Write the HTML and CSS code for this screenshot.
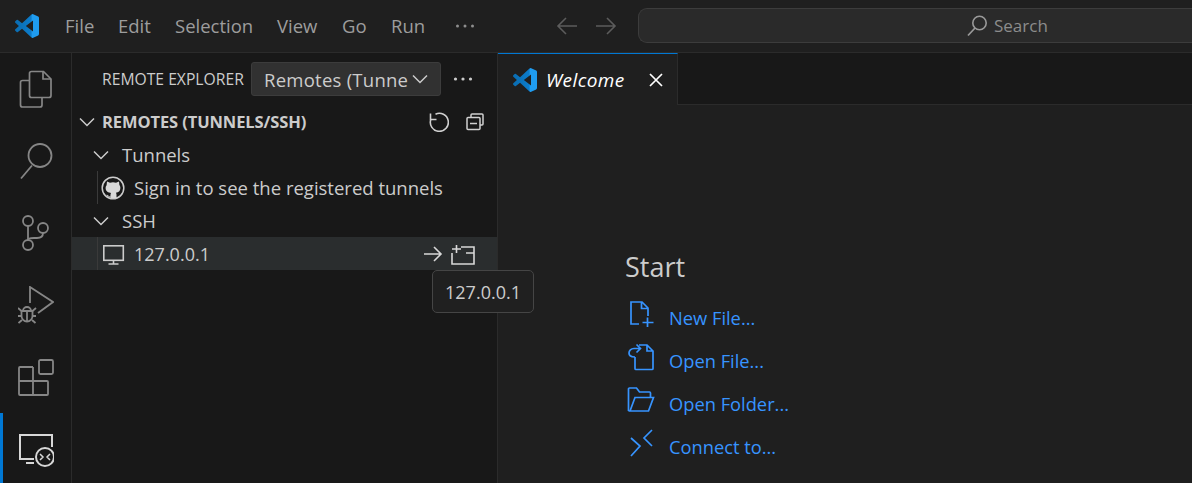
FILE: index.html
```html
<!DOCTYPE html>
<html lang="en">
<head>
<meta charset="utf-8">
<title>Remote Explorer - Visual Studio Code</title>
<link rel="stylesheet" href="styles.css">
</head>
<body>
<svg class="defs" width="0" height="0" aria-hidden="true">
  <defs>
    <linearGradient id="vsblue" x1="0" x2="1" y1="0" y2="0">
      <stop offset="0" stop-color="#0a6cb0"/>
      <stop offset=".68" stop-color="#0c7ccb"/>
      <stop offset=".7" stop-color="#1f9cf0"/>
      <stop offset="1" stop-color="#1f9cf0"/>
    </linearGradient>
    <symbol id="vslogo" viewBox="0 0 24 24">
      <path fill="url(#vsblue)" d="M23.15 2.587L18.21.21a1.494 1.494 0 0 0-1.705.29l-9.46 8.63-4.12-3.128a.999.999 0 0 0-1.276.057L.327 7.261A1 1 0 0 0 .326 8.74L3.899 12 .326 15.26a1 1 0 0 0 .001 1.479L1.65 17.94a.999.999 0 0 0 1.276.057l4.12-3.128 9.46 8.63a1.492 1.492 0 0 0 1.704.29l4.942-2.377A1.5 1.5 0 0 0 24 20.06V3.939a1.5 1.5 0 0 0-.85-1.352zm-5.146 14.861L10.826 12l7.178-5.448v10.896z"/>
    </symbol>
  </defs>
</svg>

<header class="titlebar">
  <svg class="logo" width="24" height="24"><use href="#vslogo"/></svg>
  <nav class="menu">
    <span class="menu-item">File</span>
    <span class="menu-item">Edit</span>
    <span class="menu-item">Selection</span>
    <span class="menu-item">View</span>
    <span class="menu-item">Go</span>
    <span class="menu-item">Run</span>
    <svg class="menu-more" width="20" height="6" viewBox="0 0 20 6"><g fill="#8e8e8e"><circle cx="2.500" cy="3" r="1.500"/><circle cx="10" cy="3" r="1.500"/><circle cx="17.500" cy="3" r="1.500"/></g></svg>
  </nav>
  <div class="nav-arrows">
    <svg width="22" height="18" viewBox="0 0 22 18"><path d="M10 1 2 9l8 8M2 9h19" fill="none" stroke="#5c5c5c" stroke-width="1.600"/></svg>
    <svg width="22" height="18" viewBox="0 0 22 18"><path d="M12 1l8 8-8 8M20 9H1" fill="none" stroke="#5c5c5c" stroke-width="1.600"/></svg>
  </div>
  <div class="searchbox">
    <svg width="22" height="22" viewBox="0 0 22 22"><circle cx="13.500" cy="8" r="6.700" fill="none" stroke="#9a9a9a" stroke-width="1.600"/><path d="M9 13 2 20.500" stroke="#9a9a9a" stroke-width="1.700" fill="none"/></svg>
    <span class="search-label">Search</span>
  </div>
</header>

<main class="workbench">
  <aside class="activitybar">
    <div class="act">
      <svg width="36" height="40" viewBox="0 0 36 40"><g fill="none" stroke="#868686" stroke-width="1.700"><path d="M11.500 10.500H4.500a2 2 0 0 0-2 2V35a2 2 0 0 0 2 2H22a2 2 0 0 0 2-2v-7"/><path d="M11.500 3.500a2 2 0 0 1 2-2h12l7.500 7.500V25.500a2 2 0 0 1-2 2h-17.500a2 2 0 0 1-2-2z"/><path d="M25 1.500V9h8"/></g></svg>
    </div>
    <div class="act">
      <svg width="36" height="40" viewBox="0 0 36 40"><g fill="none" stroke="#868686" stroke-width="1.800"><circle cx="22" cy="13.500" r="11.500"/><path d="M14 23.500 3 36.500"/></g></svg>
    </div>
    <div class="act">
      <svg width="36" height="40" viewBox="0 0 36 40"><g fill="none" stroke="#868686" stroke-width="1.800"><circle cx="10" cy="7" r="5"/><circle cx="25" cy="14" r="5"/><circle cx="10" cy="31" r="5"/><path d="M10 12V26"/><path d="M25 19c0 3-2 5-6 5h-3c-3 0-6 0-6 2"/></g></svg>
    </div>
    <div class="act">
      <svg width="36" height="40" viewBox="0 0 36 40"><g fill="none" stroke="#868686" stroke-width="1.800"><path d="M12 17V1l23 15-15 11"/><path d="M3.500 25h11v5a5.500 5.500 0 0 1-11 0z"/><path d="M5 25a4 4 0 0 1 8 0M0 22l3.500 3M18 22l-3.500 3M0 30h3.500M14.500 30h3.500M.5 37l3.500-3M17.500 37l-3.500-3M9 26v9"/></g></svg>
    </div>
    <div class="act">
      <svg width="36" height="40" viewBox="0 0 36 40"><g fill="none" stroke="#868686" stroke-width="1.800"><rect x="21" y="1" width="14" height="14" rx="1.500"/><path d="M15 8H2a1 1 0 0 0-1 1v26a1 1 0 0 0 1 1h27a1 1 0 0 0 1-1V23a1 1 0 0 0-1-1H1M15 8v28"/></g></svg>
    </div>
    <div class="act act-active">
      <svg width="36" height="40" viewBox="0 0 36 40"><g fill="none" stroke="#d7d7d7" stroke-width="2"><path d="M16 28H2V4h32v12"/><path d="M8 32h8"/><circle cx="27" cy="26" r="9"/><path d="M22 23l3 3-3 3M32 23l-3 3 3 3" stroke-width="1.500"/></g></svg>
    </div>
  </aside>

  <section class="sidebar">
    <div class="side-head">
      <span class="side-title">REMOTE EXPLORER</span>
      <div class="select">
        <span class="select-text">Remotes (Tunne</span>
        <svg width="16" height="10" viewBox="0 0 16 10"><path d="M1 1.500l7 7 7-7" fill="none" stroke="#cccccc" stroke-width="1.500"/></svg>
      </div>
      <svg class="side-more" width="20" height="6" viewBox="0 0 20 6"><g fill="#cccccc"><circle cx="2.500" cy="3" r="1.600"/><circle cx="10" cy="3" r="1.600"/><circle cx="17.500" cy="3" r="1.600"/></g></svg>
    </div>

    <div class="pane-head">
      <svg class="chev" width="16" height="10" viewBox="0 0 16 10"><path d="M1 1.500l7 7 7-7" fill="none" stroke="#cccccc" stroke-width="1.500"/></svg>
      <span class="pane-title">REMOTES (TUNNELS/SSH)</span>
      <div class="pane-actions">
        <svg width="20" height="20" viewBox="0 0 20 20"><g fill="none" stroke="#d0d0d0" stroke-width="1.600"><path d="M6.500 2.200A9 9 0 1 1 1.800 7.500"/><path d="M1.500 1.500V7.500H7.500"/></g></svg>
        <svg width="20" height="20" viewBox="0 0 20 20"><g fill="none" stroke="#d0d0d0" stroke-width="1.500"><path d="M6 5V3a1 1 0 0 1 1-1h10a1 1 0 0 1 1 1v9a1 1 0 0 1-1 1h-2"/><rect x="2" y="5.500" width="13" height="12" rx="1"/><path d="M5 11.500h7"/></g></svg>
      </div>
    </div>

    <div class="row row-group">
      <svg width="16" height="10" viewBox="0 0 16 10"><path d="M1 1.500l7 7 7-7" fill="none" stroke="#cccccc" stroke-width="1.500"/></svg>
      <span>Tunnels</span>
    </div>
    <div class="row row-leaf">
      <svg width="24" height="24" viewBox="0 0 24 24"><circle cx="12" cy="12" r="10.800" fill="none" stroke="#cccccc" stroke-width="1.500"/><path fill="#d8d8d8" d="M6 5.500l3 1.300a8 8 0 0 1 6 0l3-1.300.4 3.500c.8 1 1 2 1 3 0 3-2 4.500-4.500 4.800.5.500.6 1.200.6 2V22H9.500v-1.500c-2.500.500-3.500-.5-4-2 .7 0 1.400.8 2 1.200.6.300 1.200.3 2 0v-1c0-.6.200-1.200.6-1.600-2.600-.3-5.500-1.700-5.500-5 0-1 .3-2 1-2.800z"/></svg>
      <span>Sign in to see the registered tunnels</span>
    </div>
    <div class="row row-group">
      <svg width="16" height="10" viewBox="0 0 16 10"><path d="M1 1.500l7 7 7-7" fill="none" stroke="#cccccc" stroke-width="1.500"/></svg>
      <span>SSH</span>
    </div>
    <div class="row row-leaf row-hover">
      <svg width="24" height="24" viewBox="0 0 24 24"><g fill="none" stroke="#cccccc" stroke-width="1.600"><rect x="2.800" y="3.800" width="19.500" height="14.500"/><path d="M12.500 18.500v3M7.500 22h10"/></g></svg>
      <span class="host">127.0.0.1</span>
      <div class="row-actions">
        <svg width="20" height="20" viewBox="0 0 20 20"><path d="M1 10h17M11 3l7 7-7 7" fill="none" stroke="#d8d8d8" stroke-width="1.600"/></svg>
        <svg width="24" height="22" viewBox="0 0 24 22"><g fill="none" stroke="#d8d8d8" stroke-width="1.600"><path d="M10 4H23V21H1V10M15 10H23"/><path d="M1 6H10M5.500 2V10"/></g></svg>
      </div>
    </div>
    <div class="tooltip">127.0.0.1</div>
  </section>

  <section class="editor">
    <div class="tabs">
      <div class="tab">
        <svg width="24" height="24"><use href="#vslogo"/></svg>
        <span class="tab-label">Welcome</span>
        <svg class="tab-close" width="14" height="14" viewBox="0 0 14 14"><path d="M1 1l12 12M13 1 1 13" stroke="#ffffff" stroke-width="1.700" fill="none"/></svg>
      </div>
    </div>
    <div class="welcome">
      <h2 class="start-title">Start</h2>
      <a class="start-link">
        <svg width="28" height="28" viewBox="0 0 28 28"><g fill="none" stroke="#3794ff" stroke-width="1.700"><path d="M12 24H4V2h11l6 6v8M14.500 2v6.500H21"/><path d="M20.500 17.500v9.500M15.500 22.500h11"/></g></svg>
        <span>New File...</span>
      </a>
      <a class="start-link">
        <svg width="28" height="28" viewBox="0 0 28 28"><g fill="none" stroke="#3794ff" stroke-width="1.700"><path d="M8 14v11.500a1 1 0 0 0 1 1h16a1 1 0 0 0 1-1V8l-6-6h-8M20 2v6h6"/><path d="M8 14c-5 0-6-1.500-6-4s2-4.500 5-4.500h6M9.500 1.500l4 4-4 4"/></g></svg>
        <span>Open File...</span>
      </a>
      <a class="start-link">
        <svg width="28" height="28" viewBox="0 0 28 28"><g fill="none" stroke="#3794ff" stroke-width="1.700"><path d="M1.500 25V3a1 1 0 0 1 1-1h7l3 4h10a1 1 0 0 1 1 1v4"/><path d="M1.500 25h20l5-13.500H8L3 25"/></g></svg>
        <span>Open Folder...</span>
      </a>
      <a class="start-link">
        <svg width="28" height="28" viewBox="0 0 28 28"><g fill="none" stroke="#3794ff" stroke-width="1.700"><path d="M4 9l9 8-9 10M25 1l-8 8 8 8"/></g></svg>
        <span>Connect to...</span>
      </a>
    </div>
  </section>
</main>
</body>
</html>
```

FILE: styles.css
```css
* { box-sizing: border-box; }
html, body { margin: 0; height: 100%; overflow: hidden; }
body {
  background: #1f1f1f;
  color: #cccccc;
  font-family: "Open Sans", "Noto Sans", sans-serif;
  font-size: 18.5px;
  display: flex;
  flex-direction: column;
}
svg { display: block; flex: none; }
.defs { position: absolute; }

.titlebar {
  height: 53px;
  flex: none;
  display: flex;
  align-items: center;
  background: #1f1f1f;
  border-bottom: 1px solid #2b2b2b;
  padding-left: 15px;
}
.logo { margin-right: 26px; }
.menu { display: flex; align-items: center; width: 411px; flex: none; color: #9d9d9d; }
.menu-item { margin-bottom: 2px; }
.menu-item:nth-child(1) { width: 53px; }
.menu-item:nth-child(2) { width: 57px; }
.menu-item:nth-child(3) { width: 102px; }
.menu-item:nth-child(4) { width: 65px; }
.menu-item:nth-child(5) { width: 49px; }
.menu-item:nth-child(6) { width: 64px; }
.nav-arrows { display: flex; gap: 17px; margin-left: 80px; }
.searchbox {
  margin-left: 21px;
  flex: 1;
  height: 35px;
  margin-top: -1px;
  background: #2a2a2a;
  border: 1px solid #3c3c3c;
  border-right: 0;
  border-radius: 9px 0 0 9px;
  display: flex;
  align-items: center;
  padding-left: 327px;
  gap: 6px;
}
.search-label { color: #8c8c8c; font-size: 17px; }

.workbench { flex: 1; display: flex; min-height: 0; }

.activitybar {
  width: 72px;
  flex: none;
  background: #181818;
  border-right: 1px solid #2b2b2b;
  display: flex;
  flex-direction: column;
  padding-top: 16.500px;
  gap: 32.300px;
}
.act { position: relative; padding-left: 18px; height: 40px; }
.act-active::before {
  content: "";
  position: absolute;
  left: 0;
  top: -18px;
  width: 3px;
  height: 70px;
  background: #0078d4;
}

.sidebar {
  width: 426px;
  flex: none;
  position: relative;
  background: #181818;
  border-right: 1px solid #2b2b2b;
}
.side-head {
  height: 52px;
  display: flex;
  align-items: center;
  padding-left: 30px;
}
.side-title { font-size: 15.700px; width: 149px; flex: none; }
.select {
  width: 190px;
  height: 34px;
  flex: none;
  display: flex;
  align-items: center;
  justify-content: space-between;
  padding: 0 12px;
  background: #313131;
  border: 1px solid #3c3c3c;
  border-radius: 3px;
}
.select-text { white-space: nowrap; font-size: 18.500px; letter-spacing: .25px; }
.side-more { margin-left: 12px; }

.pane-head {
  height: 33px;
  display: flex;
  align-items: center;
  padding-left: 7px;
}
.pane-title { margin-left: 7px; font-weight: 700; font-size: 16.500px; letter-spacing: -.1px; }
.pane-actions { margin-left: auto; display: flex; gap: 16px; padding-right: 12px; }

.row {
  height: 33px;
  display: flex;
  align-items: center;
  position: relative;
}
.row-group { padding-left: 21px; gap: 13px; }
.row-leaf { padding-left: 29px; gap: 9px; }
.row-leaf::before {
  content: "";
  position: absolute;
  left: 25px;
  top: 0;
  bottom: 0;
  width: 1px;
  background: #3a3a3a;
}
.row-hover { background: #2a2d2e; }
.host { font-size: 18px; }
.row-actions { margin-left: auto; display: flex; align-items: center; gap: 8px; padding-right: 22px; }

.tooltip {
  position: absolute;
  left: 360px;
  top: 217px;
  width: 102px;
  height: 43px;
  background: #202020;
  border: 1px solid #454545;
  border-radius: 5px;
  display: flex;
  align-items: center;
  justify-content: center;
  font-size: 18px;
}

.editor { flex: 1; min-width: 0; background: #1f1f1f; display: flex; flex-direction: column; }
.tabs { height: 52px; flex: none; background: #181818; border-bottom: 1px solid #2b2b2b; }
.tab {
  width: 180px;
  height: 52px;
  background: #1f1f1f;
  border-top: 1px solid #0078d4;
  border-right: 1px solid #2b2b2b;
  display: flex;
  align-items: center;
  padding-left: 15px;
}
.tab-label { margin-left: 9px; font-style: italic; color: #ffffff; font-size: 19px; letter-spacing: .4px; }
.tab-close { margin-left: auto; margin-right: 14px; }

.welcome { padding: 142px 0 0 127px; }
.start-title { margin: 0 0 9px; font-weight: 400; font-size: 27px; line-height: 40px; color: #cccccc; }
.start-link {
  height: 43px;
  display: flex;
  align-items: center;
  gap: 14px;
  color: #3794ff;
  margin-left: 2px;
  font-size: 18.300px;
}
.start-link svg { margin-bottom: 7px; }
```
